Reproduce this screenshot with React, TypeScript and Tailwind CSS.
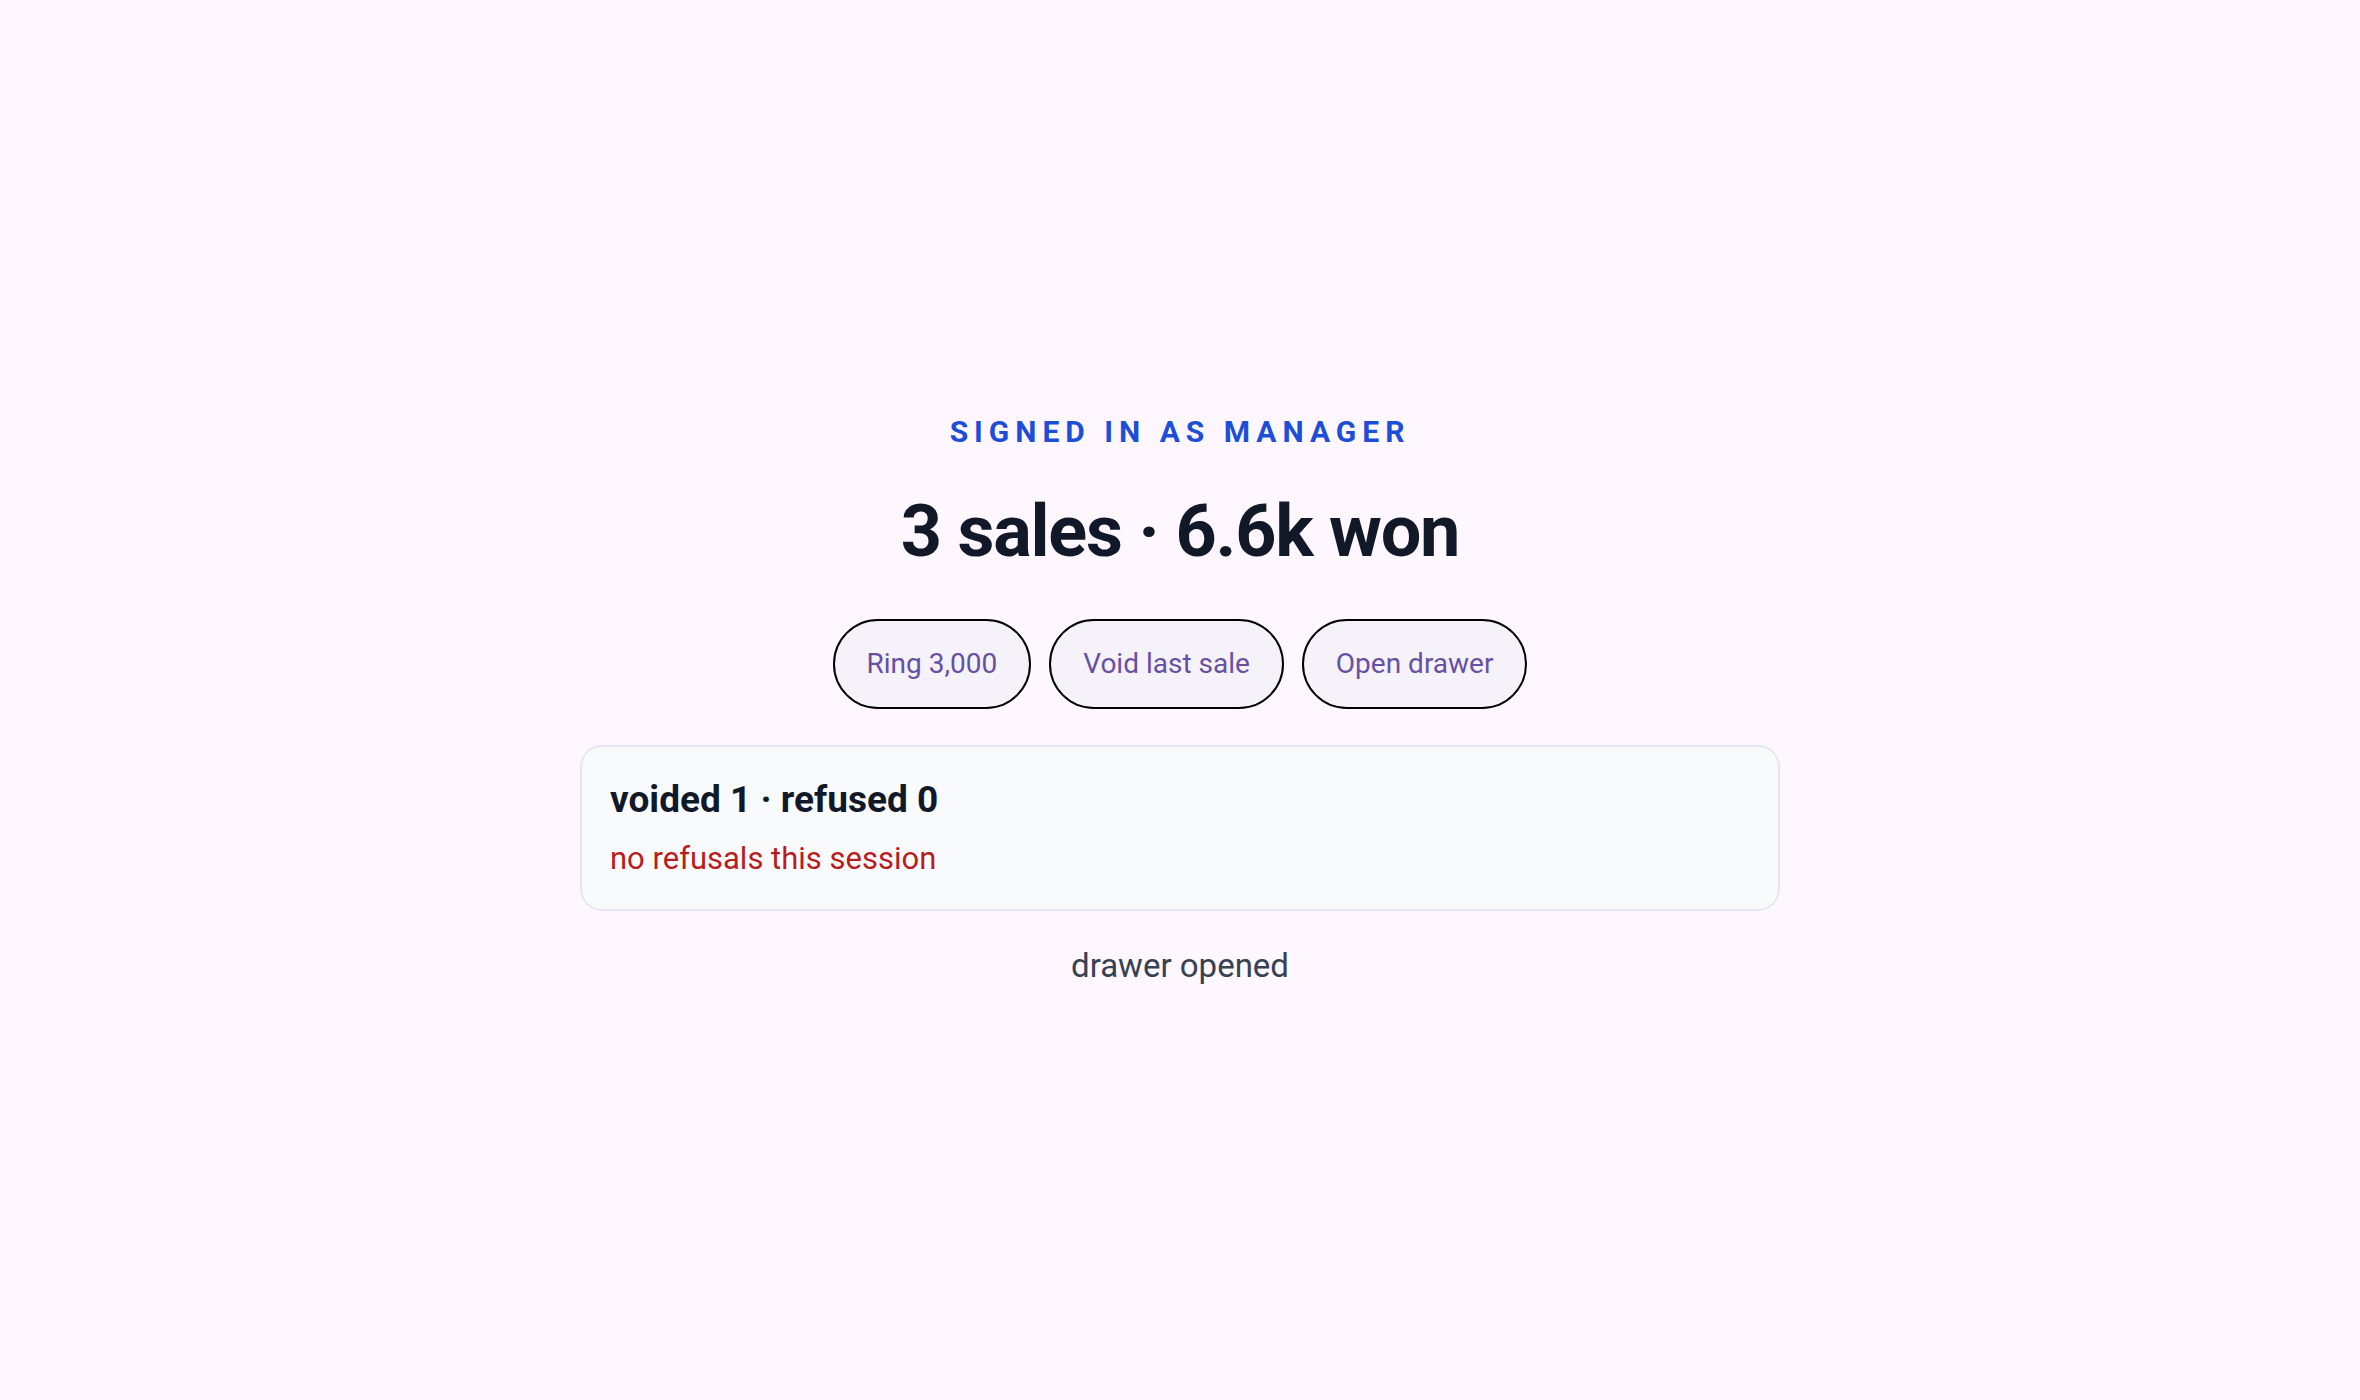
const actions = ['Ring 3,000', 'Void last sale', 'Open drawer'];

export default function App() {
  return (
    <div className="min-h-screen flex flex-col items-center justify-center pb-[4px] bg-[#fef7ff] font-['Roboto','Liberation_Sans',sans-serif]">
      {/* role label */}
      <p className="text-[30px] leading-[45px] font-bold uppercase tracking-[0.2em] text-[#1d4ed8]">
        Signed in as manager
      </p>

      {/* session totals */}
      <h1 className="mt-[42px] text-[72px] leading-[72px] font-bold tracking-[-1.25px] text-[#111827]">
        3 sales · 6.6k won
      </h1>

      <div className="mt-[51px] flex gap-[18px]">
        {actions.map((label) => (
          <button
            key={label}
            className="h-[90px] px-[32px] rounded-full border-2 border-black bg-[#f5f2fa] text-[28px] text-[#6750a4]"
          >
            {label}
          </button>
        ))}
      </div>

      {/* audit card */}
      <div className="mt-[36px] w-[1200px] rounded-[22px] border-2 border-[#e5e7eb] bg-[#f8fafc] px-[28px] py-[28px]">
        <p className="text-[37px] leading-[50px] font-bold text-[#111827]">voided 1 · refused 0</p>
        <p className="mt-[12px] text-[31px] leading-[44px] text-[#b91c1c]">no refusals this session</p>
      </div>

      <p className="mt-[32px] text-[33px] leading-[45px] text-[#374151]">drawer opened</p>
    </div>
  );
}
